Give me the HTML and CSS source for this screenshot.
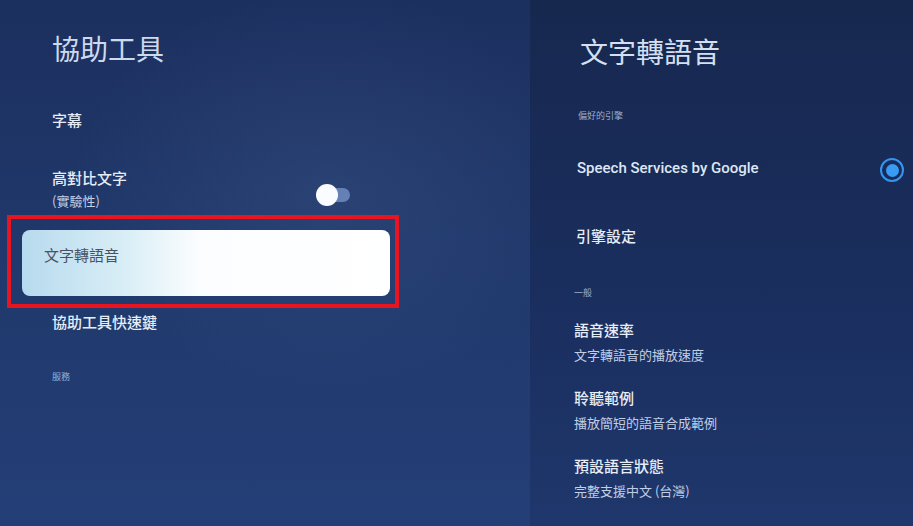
FILE: index.html
```html
<!DOCTYPE html>
<html lang="zh-Hant">
<head>
  <meta charset="UTF-8" />
  <meta name="viewport" content="width=device-width, initial-scale=1.0"/>
  <title>協助工具</title>
  <link rel="stylesheet" href="styles.css">
</head>
<body>

  <div class="screen">
    <div class="panel-left">
      <h1 class="title-left">協助工具</h1>
      <div class="item item-captions">字幕</div>

      <div class="item row-contrast">
        <div>
          <div class="item-label">高對比文字</div>
          <div class="item-note">(實驗性)</div>
        </div>
        <div class="toggle"><span class="knob"></span></div>
      </div>

      <div class="focus-box">
        <div class="card">文字轉語音</div>
      </div>

      <div class="item item-shortcut">協助工具快速鍵</div>
      <div class="section-label section-services">服務</div>
    </div>

    <div class="panel-right">
      <h1 class="title-right">文字轉語音</h1>
      <div class="section-label engine-label">偏好的引擎</div>

      <div class="engine-row">
        <span class="engine-name">Speech Services by Google</span>
        <span class="radio"><span class="radio-dot"></span></span>
      </div>

      <div class="item-label engine-settings">引擎設定</div>
      <div class="section-label general-label">一般</div>

      <div class="setting setting-first">
        <div class="item-label">語音速率</div>
        <div class="setting-sub">文字轉語音的播放速度</div>
      </div>
      <div class="setting">
        <div class="item-label">聆聽範例</div>
        <div class="setting-sub">播放簡短的語音合成範例</div>
      </div>
      <div class="setting">
        <div class="item-label">預設語言狀態</div>
        <div class="setting-sub">完整支援中文 (台灣)</div>
      </div>
    </div>
  </div>

</body>
</html>
```

FILE: styles.css
```css
html, body {
  margin: 0;
  padding: 0;
}
body {
  font-family: "Noto Sans CJK TC", "Noto Sans", sans-serif;
  background: #1b2e5c;
  color: #e6edf7;
  overflow: hidden;
}
.screen {
  display: flex;
  width: 913px;
  height: 526px;
}

/* left menu */
.panel-left {
  width: 530px;
  flex-shrink: 0;
  background:
    radial-gradient(ellipse 260px 200px at 330px 190px, rgba(120,150,200,0.12), rgba(0,0,0,0)),
    linear-gradient(180deg, #1c305f 0%, #213a6e 60%, #243f77 100%);
}
.title-left {
  margin: 31px 0 0 52px;
  font-size: 28px;
  line-height: 34px;
  font-weight: 400;
  color: #cddaee;
}
.item {
  margin-left: 52px;
  font-size: 15px;
  line-height: 20px;
  font-weight: 500;
}
.item-captions {
  margin-top: 45px;
}
.row-contrast {
  margin-top: 38px;
  width: 298px;
  display: flex;
  justify-content: space-between;
  align-items: flex-end;
}
.item-label {
  font-size: 15px;
  line-height: 20px;
  font-weight: 500;
  color: #e6edf7;
}
.item-note {
  margin-top: 5px;
  font-size: 13px;
  line-height: 16px;
  font-weight: 400;
  color: #c3d0e6;
}
.toggle {
  position: relative;
  width: 34px;
  height: 22px;
  margin-bottom: 3px;
}
.toggle::before {
  content: "";
  position: absolute;
  left: 2px;
  right: 0;
  top: 4px;
  height: 14px;
  border-radius: 7px;
  background: #6580b5;
}
.knob {
  position: absolute;
  left: 0;
  top: 0;
  width: 22px;
  height: 22px;
  border-radius: 50%;
  background: #fbfcff;
}
.focus-box {
  margin: 6px 0 0 7px;
  width: 368px;
  height: 74px;
  border: 4px solid #e8141f;
  padding: 11px 5px 0 11px;
}
.card {
  height: 66px;
  box-sizing: border-box;
  padding: 15px 0 0 22px;
  border-radius: 8px;
  background: linear-gradient(90deg, #b7daee 0%, #d9eef6 28%, #fbfdff 48%, #ffffff 100%);
  font-size: 15px;
  line-height: 20px;
  color: #4a5262;
}
.item-shortcut {
  margin-top: 4px;
}
.section-label {
  font-size: 9px;
  line-height: 12px;
  color: #9aaed0;
}
.section-services {
  margin: 39px 0 0 52px;
}

/* right detail panel */
.panel-right {
  flex: 1;
  padding: 0 9px 0 46px;
  background: linear-gradient(180deg, #17284f 0%, #1a2e5e 55%, #1f376c 100%);
}
.title-right {
  margin: 34px 0 0 4px;
  font-size: 28px;
  line-height: 34px;
  font-weight: 400;
  color: #d4e0f1;
}
.engine-label {
  margin-top: 42px;
  margin-left: 2px;
}
.engine-row {
  margin-top: 34px;
  display: flex;
  justify-content: space-between;
  align-items: center;
  height: 24px;
}
.engine-name {
  font-family: Roboto, "Noto Sans", sans-serif;
  font-size: 15px;
  font-weight: 500;
  color: #dde7f4;
  margin-left: 1px;
}
.radio {
  width: 24px;
  height: 24px;
  box-sizing: border-box;
  border: 2.5px solid #3496f0;
  border-radius: 50%;
  display: flex;
  align-items: center;
  justify-content: center;
  margin-top: 4px;
}
.radio-dot {
  width: 13px;
  height: 13px;
  border-radius: 50%;
  background: #3a9bf2;
}
.engine-settings {
  margin-top: 46px;
}
.general-label {
  margin-top: 41px;
  margin-left: -2px;
}
.setting {
  margin-top: 25px;
  margin-left: -2px;
}
.setting-first {
  margin-top: 21px;
}
.setting-sub {
  margin-top: 7px;
  font-size: 13px;
  line-height: 16px;
  color: #c0cee6;
}
```
